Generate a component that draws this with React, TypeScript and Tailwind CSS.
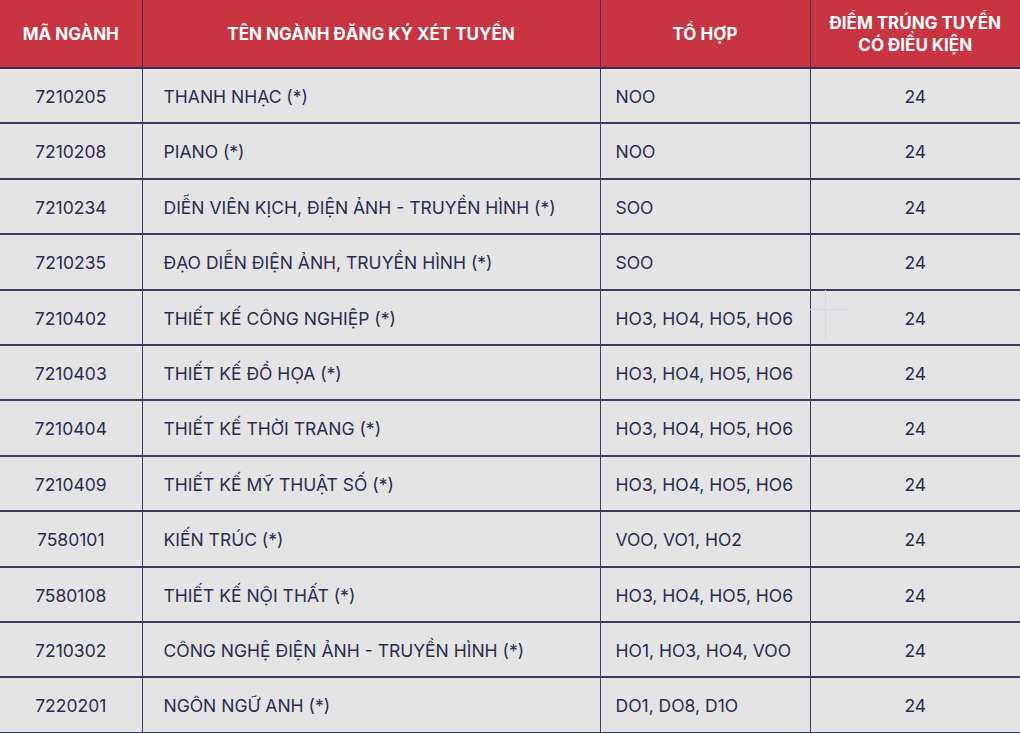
const rows = [
  ['7210205', 'THANH NHẠC (*)', 'NOO'],
  ['7210208', 'PIANO (*)', 'NOO'],
  ['7210234', 'DIỄN VIÊN KỊCH, ĐIỆN ẢNH - TRUYỀN HÌNH (*)', 'SOO'],
  ['7210235', 'ĐẠO DIỄN ĐIỆN ẢNH, TRUYỀN HÌNH (*)', 'SOO'],
  ['7210402', 'THIẾT KẾ CÔNG NGHIỆP (*)', 'HO3, HO4, HO5, HO6'],
  ['7210403', 'THIẾT KẾ ĐỒ HỌA (*)', 'HO3, HO4, HO5, HO6'],
  ['7210404', 'THIẾT KẾ THỜI TRANG (*)', 'HO3, HO4, HO5, HO6'],
  ['7210409', 'THIẾT KẾ MỸ THUẬT SỐ (*)', 'HO3, HO4, HO5, HO6'],
  ['7580101', 'KIẾN TRÚC (*)', 'VOO, VO1, HO2'],
  ['7580108', 'THIẾT KẾ NỘI THẤT (*)', 'HO3, HO4, HO5, HO6'],
  ['7210302', 'CÔNG NGHỆ ĐIỆN ẢNH - TRUYỀN HÌNH (*)', 'HO1, HO3, HO4, VOO'],
  ['7220201', 'NGÔN NGỮ ANH (*)', 'DO1, DO8, D1O'],
]

export default function App() {
  return (
    <div
      className="relative w-[1020px] h-[733px] overflow-hidden bg-[#e4e4e4]"
      style={{ fontFamily: 'Inter, "Noto Sans", sans-serif' }}
    >
      <table className="w-full border-collapse table-fixed text-[#2a2c50]">
        <colgroup>
          <col className="w-[142px]" />
          <col className="w-[458px]" />
          <col className="w-[210px]" />
          <col />
        </colgroup>
        <thead>
          <tr className="h-[68px] bg-[#c8343f] text-white font-bold text-[17px] leading-[22px]">
            <th className="border-r border-b-2 border-[#3b3050]">MÃ NGÀNH</th>
            <th className="border-x border-b-2 border-[#3b3050]">TÊN NGÀNH ĐĂNG KÝ XÉT TUYỂN</th>
            <th className="border-x border-b-2 border-[#3b3050]">TỔ HỢP</th>
            <th className="border-l border-b-2 border-[#3b3050]">
              ĐIỂM TRÚNG TUYỂN
              <br />
              CÓ ĐIỀU KIỆN
            </th>
          </tr>
        </thead>
        <tbody className="text-[17.5px]">
          {rows.map((r) => (
            <tr key={r[0]} className="h-[55.4px]">
              <td className="border-r border-b-2 border-[#3a3c5e] text-center pt-[3px]">{r[0]}</td>
              <td className="border-x border-b-2 border-[#3a3c5e] pl-[21px] pt-[3px]">{r[1]}</td>
              <td className="border-x border-b-2 border-[#3a3c5e] pl-[15px] pt-[3px]">{r[2]}</td>
              <td className="border-l border-b-2 border-[#3a3c5e] text-center pt-[3px]">24</td>
            </tr>
          ))}
        </tbody>
      </table>
      <div className="absolute left-[825px] top-[290px] w-px h-[50px] bg-[#d6d6f4]" />
      <div className="absolute left-[806px] top-[309px] w-[42px] h-px bg-[#d6d6f4]" />
    </div>
  )
}
